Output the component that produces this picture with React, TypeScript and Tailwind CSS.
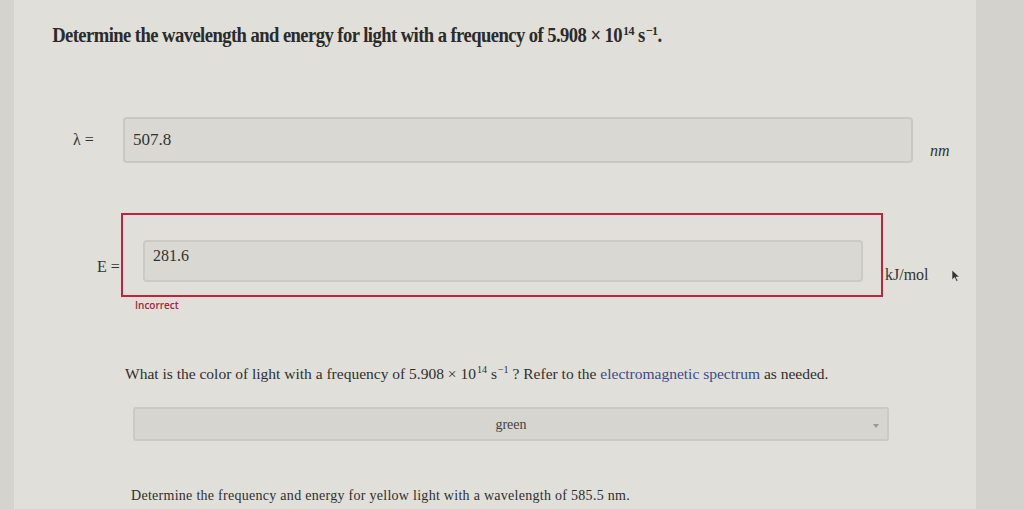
/**
 * App
 * 파장/에너지 계산 문제 화면
 */

const serif = { fontFamily: '"Liberation Serif", "DejaVu Serif", serif' };

function Sup({ children }: { children: React.ReactNode }) {
  return (
    <span className="text-[0.65em] relative -top-[0.55em] align-baseline ml-[1px]">{children}</span>
  );
}

export default function App() {
  return (
    <div
      className="w-[1024px] h-[509px] overflow-hidden bg-[#d9d8d2] flex"
      style={serif}
    >
      <div className="w-[14px] bg-[#d4d3cd]" />
      <div className="flex-1 bg-[#e0dfd9] flex flex-col">
        {/* 문제 제목 */}
        <h1 className="pl-[41px] pt-[20px] text-[20px] font-bold tracking-[-0.03em] scale-x-[0.93] origin-left text-[#2b2b2b] whitespace-nowrap">
          Determine the wavelength and energy for light with a frequency of 5.908 × 10<Sup>14</Sup> s<Sup>−1</Sup>.
        </h1>

        {/* λ 입력 */}
        <div className="flex items-start mt-[67px] pl-[59px]">
          <span className="w-[50px] pt-[11px] text-[16px] text-[#333]">λ =</span>
          <div className="w-[790px] h-[46px] rounded-[4px] border-2 border-[#c9c8c2] bg-[#d9d8d3] px-[8px] pt-[8px] text-[17px] text-[#333]">
            507.8
          </div>
          <span className="ml-[17px] pt-[22px] text-[16px] italic text-[#333]">nm</span>
        </div>

        {/* E 입력 (오답) */}
        <div className="flex items-start mt-[50px] pl-[83px]">
          <span className="w-[24px] pt-[42px] text-[16px] text-[#333]">E =</span>
          <div className="flex flex-col">
            <div className="w-[762px] h-[84px] border-2 border-[#c2213f] pl-[20px] pr-[18px] pt-[25px]">
              <div className="h-[42px] rounded-[4px] border-2 border-[#cbcac4] bg-[#d9d8d3] px-[8px] pt-[2px] text-[16px] text-[#333]">
                281.6
              </div>
            </div>
            <span
              className="pl-[14px] pt-[1px] text-[10px] font-semibold text-[#a8243a]"
              style={{ fontFamily: '"Open Sans", "Liberation Sans", sans-serif' }}
            >
              Incorrect
            </span>
          </div>
          <span className="ml-[2px] pt-[50px] text-[16px] text-[#333]">kJ/mol</span>
          <svg className="ml-[22px] mt-[56px]" width="9" height="13" viewBox="0 0 9 13">
            <path d="M1 1 L1 11 L3.5 8.5 L5.5 12.5 L7 11.8 L5 8 L8.5 8 Z" fill="#333" stroke="#eee" strokeWidth="0.6" />
          </svg>
        </div>

        {/* 색상 질문 */}
        <p className="pl-[111px] mt-[49px] text-[15.5px] text-[#2f2f2f] whitespace-nowrap">
          What is the color of light with a frequency of 5.908 × 10<Sup>14</Sup> s<Sup>−1</Sup> ? Refer to the{' '}
          <span className="text-[#3b4c8c]">electromagnetic spectrum</span> as needed.
        </p>

        <div className="ml-[119px] mt-[22px] w-[756px] h-[34px] rounded-[3px] border-2 border-[#cbcac4] bg-[#d6d5cf] flex items-center relative">
          <span className="flex-1 text-center text-[14px] text-[#444]">green</span>
          <span className="absolute right-[8px] top-[15px] w-0 h-0 border-l-[3px] border-r-[3px] border-t-[4px] border-l-transparent border-r-transparent border-t-[#999]" />
        </div>

        <p className="pl-[117px] mt-[44px] text-[14px] tracking-[0.02em] text-[#2f2f2f] whitespace-nowrap">
          Determine the frequency and energy for yellow light with a wavelength of 585.5 nm.
        </p>
      </div>
      <div className="w-[48px] bg-[#d3d2cc]" />
    </div>
  );
}
